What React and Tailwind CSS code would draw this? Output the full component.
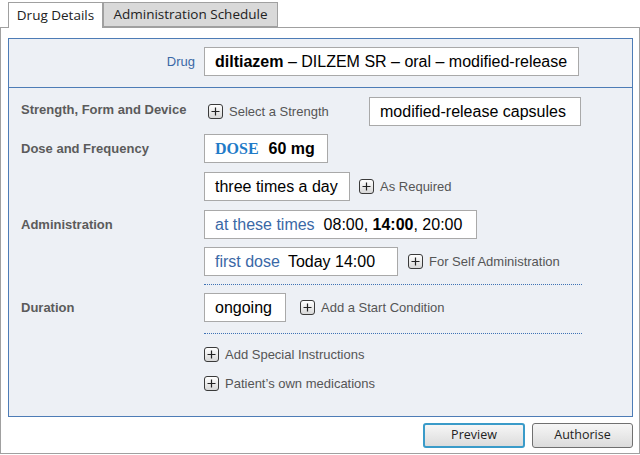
import React from "react";

const sans = { fontFamily: '"Liberation Sans", Arial, sans-serif' };

function PlusBox() {
  return (
    <span className="inline-flex h-[15px] w-[15px] shrink-0 items-center justify-center rounded-[3px] border border-[#3a3a3a] bg-gradient-to-b from-white to-[#d8d8d8]">
      <svg width="9" height="9" viewBox="0 0 9 9">
        <path d="M4.5 0.5v8M0.5 4.5h8" stroke="#222" strokeWidth="1.2" />
      </svg>
    </span>
  );
}

function AddLink({ children, className = "" }) {
  return (
    <span className={`flex items-center gap-[6px] text-[13px] text-[#555] ${className}`}>
      <PlusBox />
      <span>{children}</span>
    </span>
  );
}

function Box({ w, children, className = "" }) {
  return (
    <div className={`flex h-[29px] shrink-0 items-center border border-[#a9a9a9] bg-white px-[10px] text-[16px] text-black ${w} ${className}`}>
      {children}
    </div>
  );
}

function Row({ label, children, className = "" }) {
  return (
    <div className={`flex items-center ${className}`}>
      <div className="w-[183px] shrink-0 text-[13px] font-bold text-[#5b5b5b]">{label}</div>
      <div className="flex items-center">{children}</div>
    </div>
  );
}

function Dotted({ className = "" }) {
  return <div className={`ml-[183px] w-[378px] border-t border-dotted border-[#3f72b4] ${className}`} />;
}

export default function App() {
  return (
    <div className="h-[455px] w-[640px] bg-white" style={sans}>
      <div className="flex h-[27px] items-end pl-[8px]" style={{ fontFamily: '"Open Sans", "Noto Sans", sans-serif' }}>
        <div className="relative z-10 -mb-px flex h-[26px] w-[95px] items-center justify-center border border-b-0 border-[#a0a0a0] bg-white text-[13.5px] text-[#222]">
          Drug Details
        </div>
        <div className="flex h-[25px] w-[175px] items-center justify-center border border-[#a0a0a0] bg-[#d9d9d9] text-[13.5px] text-[#222]">
          Administration Schedule
        </div>
      </div>

      <div className="h-[427px] w-[640px] border border-[#a0a0a0] pt-[10px]">
        <div className="ml-[7px] h-[379px] w-[625px] border border-[#4d7cb6] bg-[#edf0f5]">
          <div className="flex items-center border-b border-[#4d7cb6] pb-[11px] pt-[8px]">
            <div className="w-[190px] pr-[4px] text-right text-[13px] text-[#3a68a6]">Drug</div>
            <Box w="w-[375px] ml-[5px]">
              <span className="font-bold">diltiazem</span>
              <span>&nbsp;– DILZEM SR – oral – modified-release</span>
            </Box>
          </div>

          <div className="pl-[12px]">
            <Row label={<span className="relative -top-[2px]">Strength, Form and Device</span>} className="mt-[9px]">
              <AddLink className="ml-[4px] w-[161px]">Select a Strength</AddLink>
              <Box w="w-[212px]">modified-release capsules</Box>
            </Row>

            <Row label="Dose and Frequency" className="mt-[8px]">
              <Box w="w-[124px]">
                <span className="font-bold text-[#1f7bc8]" style={{ fontFamily: '"Liberation Serif", "Times New Roman", serif' }}>
                  DOSE
                </span>
                <span className="ml-[10px] font-bold">60 mg</span>
              </Box>
            </Row>

            <Row label="" className="mt-[9px]">
              <Box w="w-[146px]">three times a day</Box>
              <AddLink className="ml-[9px]">As Required</AddLink>
            </Row>

            <Row label="Administration" className="mt-[9px]">
              <Box w="w-[273px]">
                <span className="text-[#3a68a6]">at these times</span>
                <span className="ml-[9px]">
                  08:00, <span className="font-bold">14:00</span>, 20:00
                </span>
              </Box>
            </Row>

            <Row label="" className="mt-[8px]">
              <Box w="w-[194px]">
                <span className="text-[#3a68a6]">first dose</span>
                <span className="ml-[8px]">Today 14:00</span>
              </Box>
              <AddLink className="ml-[10px]">For Self Administration</AddLink>
            </Row>

            <Dotted className="mt-[8px]" />

            <Row label="Duration" className="mt-[8px]">
              <Box w="w-[82px]">ongoing</Box>
              <AddLink className="ml-[14px]">Add a Start Condition</AddLink>
            </Row>

            <Dotted className="mt-[11px]" />

            <div className="ml-[183px] mt-[11px] flex flex-col gap-[9px]">
              <AddLink>Add Special Instructions</AddLink>
              <AddLink>Patient’s own medications</AddLink>
            </div>
          </div>
        </div>

        <div className="mt-[6px] flex justify-end gap-[7px] pr-[6px]" style={{ fontFamily: '"Open Sans", "Noto Sans", sans-serif' }}>
          <button className="flex h-[25px] w-[102px] items-center justify-center rounded-[3px] border-2 border-[#3a9bc9] bg-gradient-to-b from-[#f6f6f6] to-[#dcdcdc] text-[12.5px] text-[#222]">
            Preview
          </button>
          <button className="flex h-[25px] w-[101px] items-center justify-center rounded-[3px] border border-[#707070] bg-gradient-to-b from-[#f6f6f6] to-[#dcdcdc] text-[12.5px] text-[#222]">
            Authorise
          </button>
        </div>
      </div>
    </div>
  );
}
